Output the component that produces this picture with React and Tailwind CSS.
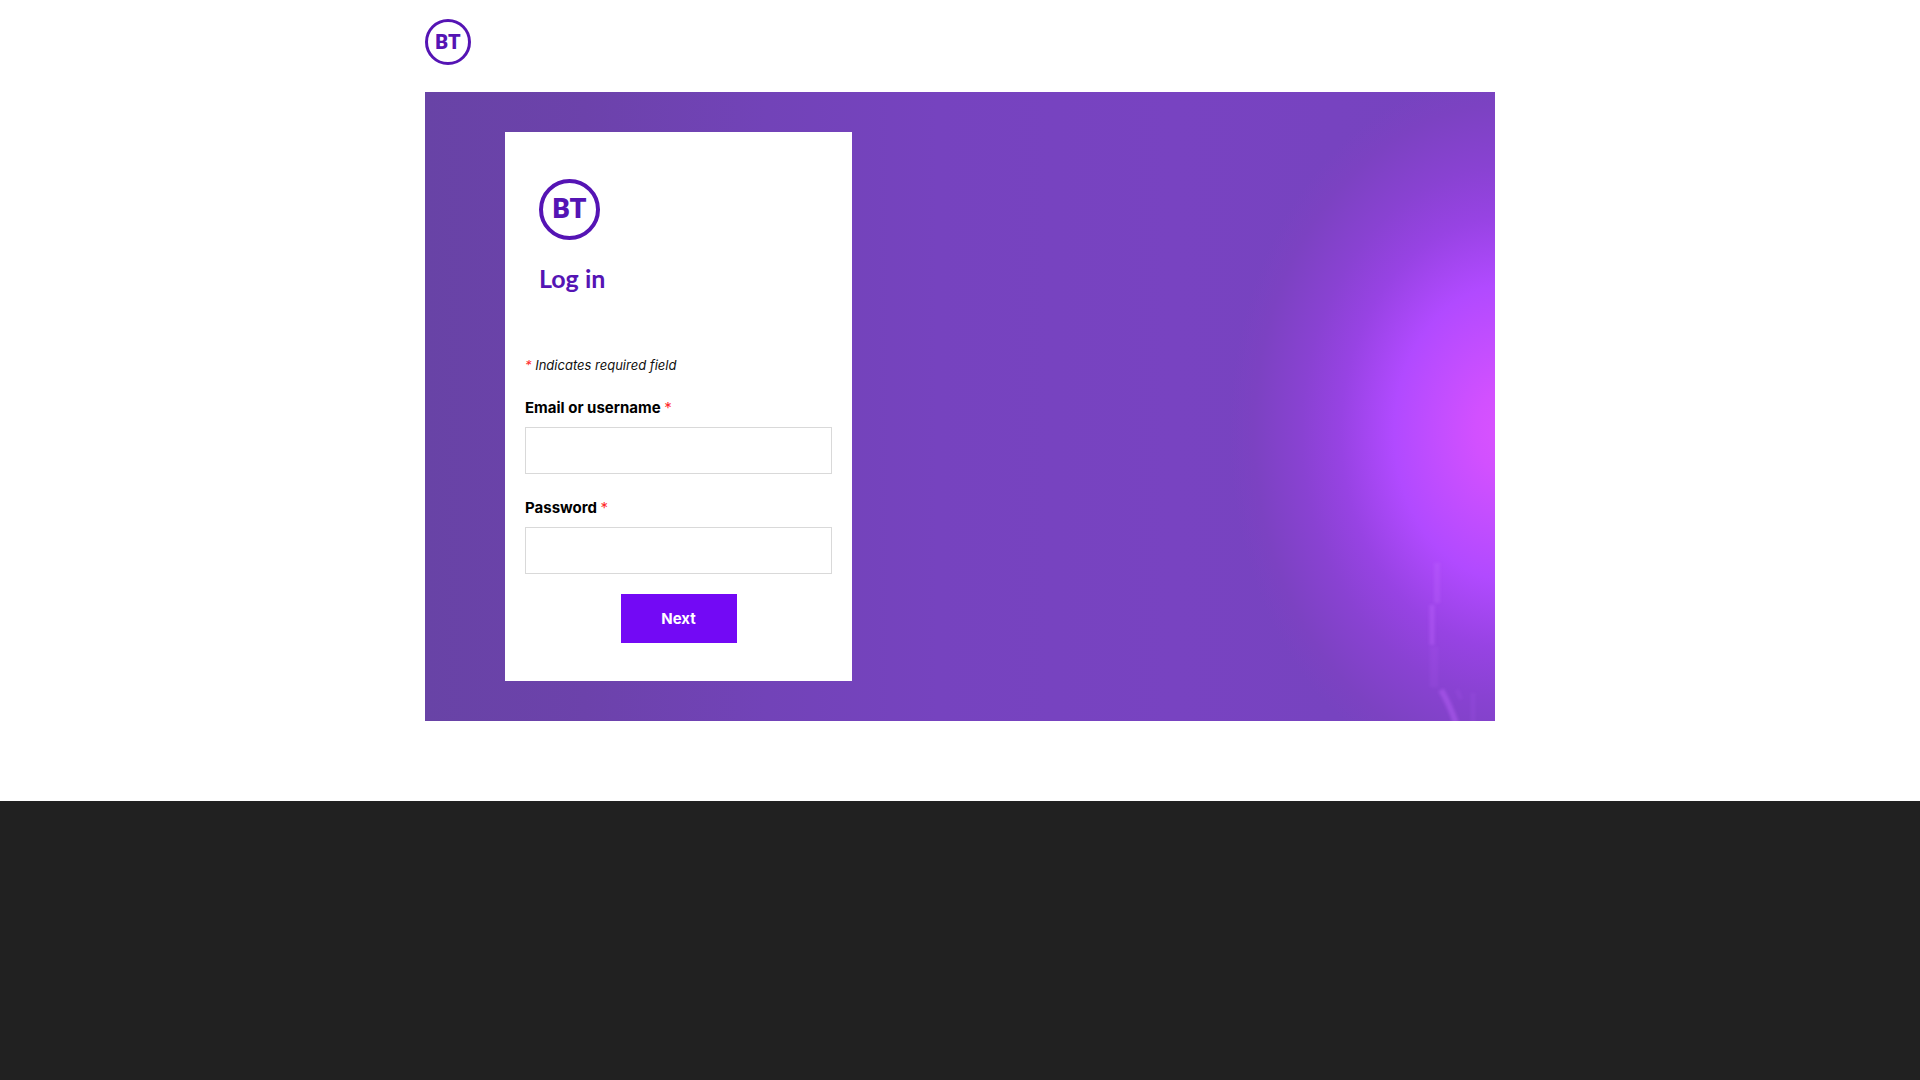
function Logo({ className }) {
  return (
    <span
      role="img"
      aria-label="BT"
      className={"flex items-center justify-center rounded-full border-[#5514b4] font-['Roboto',sans-serif] leading-none font-black text-[#5514b4] " + className}
    >
      BT
    </span>
  );
}

function Required() {
  return <span className="font-normal text-[#ff2b2b]">*</span>;
}

function Field({ id, label, type, autoComplete }) {
  return (
    <div className="flex flex-col gap-[7px]">
      <label htmlFor={id} className="text-[15px] leading-6 font-bold text-black">
        {label} <Required />
      </label>
      <input
        id={id}
        name={id}
        type={type}
        autoComplete={autoComplete}
        required
        className="h-[47px] w-full border border-[#d9d9d9] bg-white px-3 text-base text-black shadow-none outline-none focus:border-[#5514b4]"
      />
    </div>
  );
}

function Streaks() {
  return (
    <svg viewBox="0 0 80 170" aria-hidden="true" className="pointer-events-none absolute right-0 bottom-0 h-[170px] w-20">
      <defs>
        <filter id="soften" x="-50%" y="-10%" width="200%" height="120%">
          <feGaussianBlur stdDeviation="1.8" />
        </filter>
      </defs>
      <g filter="url(#soften)" fill="none" stroke="#c063ff">
        <path d="M22 12V52" strokeWidth="6" opacity=".28" />
        <path d="M17 54V94" strokeWidth="5" opacity=".38" />
        <path d="M19 96V136" strokeWidth="8" opacity=".12" />
        <path d="M26 139Q33 150 41 172" strokeWidth="6" opacity=".4" />
        <path d="M42 139L46 148M58 142V172" strokeWidth="4" opacity=".12" />
      </g>
    </svg>
  );
}

export default function App() {
  return (
    <div className="flex min-h-screen flex-col bg-white font-['Inter',sans-serif]">
      <header className="mx-auto w-full max-w-[1070px] pt-[19px] pb-[27px]">
        <a href="#" aria-label="BT home" className="inline-flex align-top">
          <Logo className="size-[46px] border-[3px] text-[20px]" />
        </a>
      </header>

      <main className="mx-auto w-full max-w-[1070px] pb-20">
        <section className="relative overflow-hidden bg-[radial-gradient(ellipse_280px_360px_at_calc(100%_+_14px)_340px,#da52ff_0%,#d250ff_12%,#c44eff_24%,#b14aff_41%,#9743e3_60%,#8942d2_74%,#7c42c2_91%,#7643bf00_100%),linear-gradient(90deg,#6843a6_0%,#6c42ab_15%,#7243b8_32%,#7643bf_48%,#7843c1_70%,#7643bf_100%)] px-20 py-10">
          <Streaks />
          <form className="relative w-full max-w-[347px] bg-white px-5 pb-[38px]" onSubmit={(e) => e.preventDefault()}>
            <div className="px-3.5 pt-[47px]">
              <Logo className="size-[61px] border-4 text-[27px]" />
              <h1 className="mt-[22px] font-['Lato',sans-serif] text-[25px] leading-8 font-bold text-[#5514b4]">Log in</h1>
            </div>
            <p className="mt-[59px] text-[13px] leading-6 text-[#111111] italic">
              <Required /> Indicates required field
            </p>
            <div className="mt-[19px] flex flex-col gap-[22px]">
              <Field id="username" label="Email or username" type="text" autoComplete="username" />
              <Field id="password" label="Password" type="password" autoComplete="current-password" />
            </div>
            <button type="submit" className="mx-auto mt-5 flex h-[49px] w-[116px] items-center justify-center bg-[#7309f5] pt-px text-[15px] font-bold text-white hover:bg-[#5514b4]">
              Next
            </button>
          </form>
        </section>
      </main>

      <footer className="grow bg-[#212121]" />
    </div>
  );
}
